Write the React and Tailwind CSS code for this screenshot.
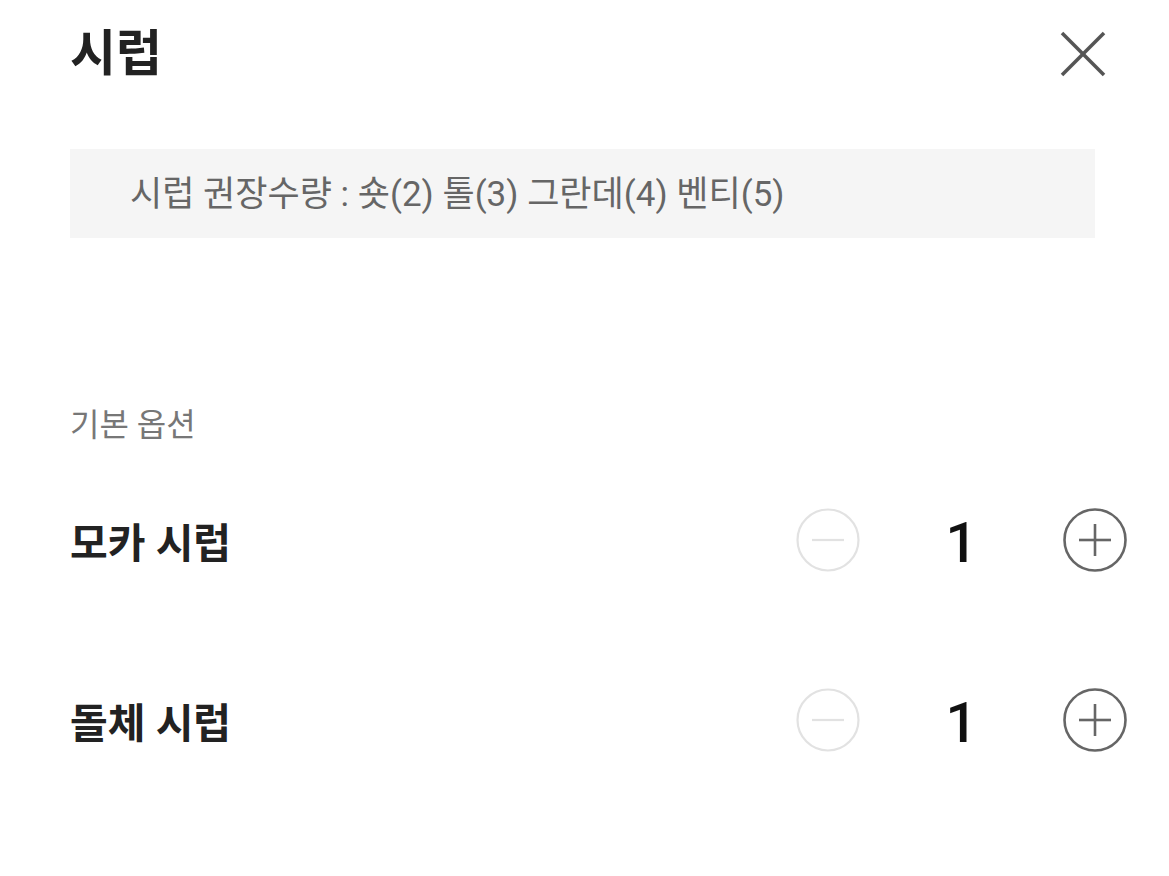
const FONT = {
  fontFamily: '"Roboto", "Noto Sans CJK KR", sans-serif',
};

function MinusCircle() {
  return (
    <svg width="64" height="64" viewBox="0 0 64 64" fill="none">
      <circle cx="32" cy="32" r="30.5" stroke="#e2e2e2" strokeWidth="2.2" />
      <line x1="16" y1="32" x2="48" y2="32" stroke="#e2e2e2" strokeWidth="2.2" />
    </svg>
  );
}

function PlusCircle() {
  return (
    <svg width="64" height="64" viewBox="0 0 64 64" fill="none">
      <circle cx="32" cy="32" r="30.5" stroke="#666" strokeWidth="2.6" />
      <line x1="16" y1="32" x2="48" y2="32" stroke="#666" strokeWidth="2.6" />
      <line x1="32" y1="16" x2="32" y2="48" stroke="#666" strokeWidth="2.6" />
    </svg>
  );
}

function OptionRow({ name, count }) {
  return (
    <div className="flex h-[64px] items-center justify-between pr-[42px]">
      <p className="text-[41px] font-bold leading-none text-[#222]">
        {name}
      </p>
      <div className="relative -top-[4px] flex items-center">
        <button className="flex h-[64px] w-[64px] items-center justify-center">
          <MinusCircle />
        </button>
        <span className="relative top-[3px] w-[203px] text-center text-[56px] font-medium leading-none text-[#111]">
          {count}
        </span>
        <button className="flex h-[64px] w-[64px] items-center justify-center">
          <PlusCircle />
        </button>
      </div>
    </div>
  );
}

export default function App() {
  const options = [
    { name: "모카 시럽", count: 1 },
    { name: "돌체 시럽", count: 1 },
  ];

  return (
    <div className="min-h-[876px] w-full bg-white pl-[70px]" style={FONT}>
      {/* HEADER */}
      <div className="flex items-center justify-between pr-[62px] pt-[26px]">
        <h1 className="text-[50px] font-bold leading-[56px] text-[#222]">
          시럽
        </h1>
        <button className="flex h-[48px] w-[48px] items-center justify-center">
          <svg width="46" height="46" viewBox="0 0 46 46" fill="none">
            <line x1="2" y1="2" x2="44" y2="44" stroke="#555" strokeWidth="3.6" />
            <line x1="44" y1="2" x2="2" y2="44" stroke="#555" strokeWidth="3.6" />
          </svg>
        </button>
      </div>

      {/* GUIDE */}
      <div className="mr-[74px] mt-[67px] flex h-[89px] items-center bg-[#f5f5f5] pl-[60px]">
        <p className="relative top-[2px] text-[35px] text-[#666]">
          시럽 권장수량 : 숏(2) 톨(3) 그란데(4) 벤티(5)
        </p>
      </div>

      {/* OPTIONS */}
      <p className="mt-[171px] text-[32px] leading-none text-[#777]">기본 옵션</p>

      <div className="mt-[71px] flex flex-col gap-[116px]">
        {options.map((o) => (
          <OptionRow key={o.name} name={o.name} count={o.count} />
        ))}
      </div>
    </div>
  );
}
